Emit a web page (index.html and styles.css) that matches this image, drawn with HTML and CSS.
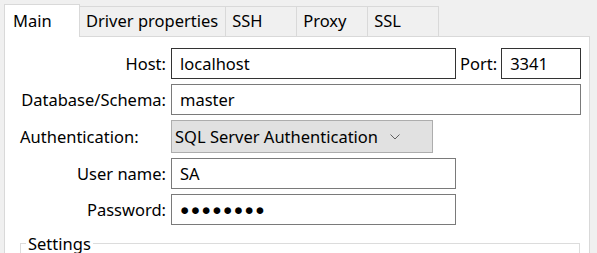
FILE: index.html
```html
<!DOCTYPE html>
<html lang="en">
<head>
    <meta charset="UTF-8">
    <title>Connection settings</title>
    <link rel="stylesheet" href="styles.css">
</head>
<body>
    <div class="dialog">
        <div class="tabs">
            <div class="tab tab-active tab-main">Main</div>
            <div class="tab">Driver properties</div>
            <div class="tab">SSH</div>
            <div class="tab">Proxy</div>
            <div class="tab">SSL</div>
            <div class="tab-fill"></div>
        </div>
        <div class="panel">
            <div class="form">
                <span class="label">Host:</span>
                <div class="host-row">
                    <div class="field field-dark host">localhost</div>
                    <span class="port-label">Port:</span>
                    <div class="field field-dark port">3341</div>
                </div>

                <span class="label">Database/Schema:</span>
                <div class="field wide">master</div>

                <span class="label label-left">Authentication:</span>
                <div class="combo">
                    <span>SQL Server Authentication</span>
                    <svg class="chevron" width="10" height="6" viewBox="0 0 10 6">
                        <polyline points="0.5,0.5 5,5 9.5,0.5" fill="none" stroke="#606060" stroke-width="1"/>
                    </svg>
                </div>

                <span class="label">User name:</span>
                <div class="field">SA</div>

                <span class="label">Password:</span>
                <div class="field password">●●●●●●●●</div>
            </div>

            <fieldset class="settings">
                <legend>Settings</legend>
            </fieldset>
        </div>
    </div>
</body>
</html>
```

FILE: styles.css
```css
body {
    margin: 0;
    background-color: #f0f0f0;
    font-family: "Noto Sans", sans-serif;
    font-size: 16.5px;
    color: #000;
    overflow: hidden;
}
.dialog {
    padding: 4px 0 0 4px;
    width: 586px;
}
.tabs {
    display: flex;
    align-items: flex-end;
    height: 33px;
}
.tab {
    box-sizing: border-box;
    height: 31px;
    min-width: 71px;
    padding: 0 7px 0 6px;
    line-height: 28px;
    background-color: #f0f0f0;
    border: 1px solid #d9d9d9;
    border-left: none;
    white-space: nowrap;
}
.tab-main {
    width: 76px;
    padding-left: 8px;
}
.tab-active {
    height: 33px;
    line-height: 32px;
    background-color: #fff;
    border-left: 1px solid #d9d9d9;
    border-bottom: none;
}
.tab-fill {
    flex: 1;
    border-bottom: 1px solid #d9d9d9;
}
.panel {
    background-color: #fff;
    border-left: 1px solid #d9d9d9;
    border-right: 1px solid #d9d9d9;
    padding: 11px 9px 10px 15px;
}
.form {
    display: grid;
    grid-template-columns: 146px auto;
    grid-template-rows: 31px 31px 33px 31px 31px;
    column-gap: 5px;
    row-gap: 5px;
    align-items: center;
}
.label {
    text-align: right;
    white-space: nowrap;
}
.label-left {
    text-align: left;
}
.host-row {
    display: flex;
    align-items: center;
}
.port-label {
    margin: 0 4px;
}
.field {
    box-sizing: border-box;
    width: 285px;
    height: 31px;
    padding: 0 8px;
    line-height: 29px;
    background-color: #fff;
    border: 1px solid #7a7a7a;
    white-space: nowrap;
}
.field-dark {
    border-color: #333;
}
.port {
    width: 80px;
}
.wide {
    width: 410px;
}
.password {
    font-size: 15.5px;
    letter-spacing: 1.4px;
}
.combo {
    box-sizing: border-box;
    display: flex;
    align-items: center;
    justify-content: space-between;
    width: 262px;
    height: 33px;
    padding: 0 32px 0 3px;
    background-color: #e1e1e1;
    border: 1px solid #adadad;
}
.settings {
    margin: 7px 0 0 0;
    padding: 0 5px 20px 5px;
    width: 548px;
    border: 1px solid #dcdcdc;
}
.settings legend {
    padding: 0 2px;
}
```
